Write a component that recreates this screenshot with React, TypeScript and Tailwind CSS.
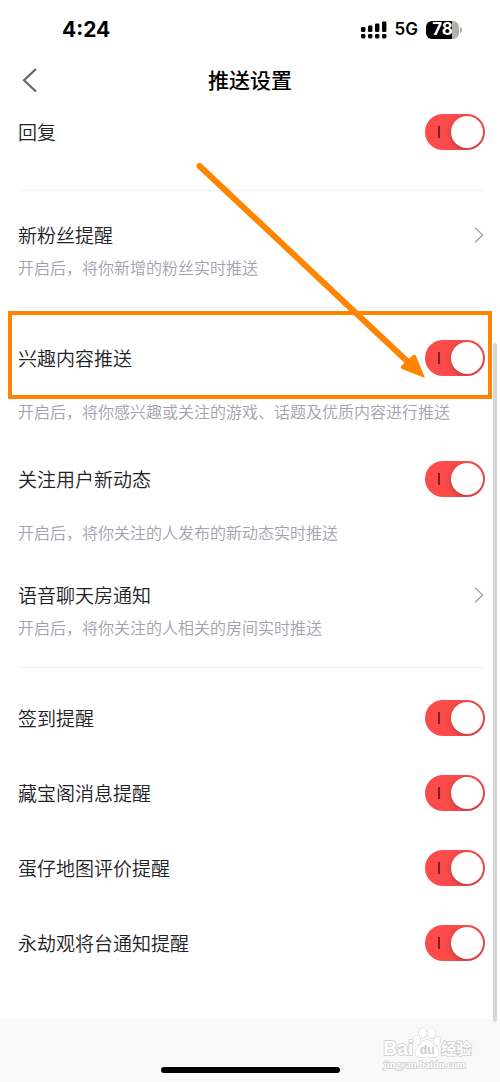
import { useState } from 'react';

function Toggle({ id }: { id: string }) {
  const [on, setOn] = useState(true);

  return (
    <input
      id={id}
      type="checkbox"
      role="switch"
      checked={on}
      onChange={(e) => setOn(e.target.checked)}
      className="relative h-9 w-15 flex-none cursor-pointer appearance-none overflow-hidden rounded-full bg-neutral-300 before:absolute before:top-3 before:left-[13px] before:h-3 before:w-[2px] before:bg-[#7c2222] after:absolute after:top-[2px] after:left-[2px] after:size-8 after:rounded-full after:bg-white after:shadow-[0_2px_6px_rgba(0,0,0,0.25)] checked:bg-[#fc4b4b] checked:after:left-[26px]"
    />
  );
}

function ToggleRow({ id, label }: { id: string; label: string }) {
  return (
    <div className="flex h-[75px] items-center justify-between pr-[15px] pl-[18px]">
      <label htmlFor={id} className="text-[19px] leading-7">
        {label}
      </label>
      <Toggle id={id} />
    </div>
  );
}

function Description({ children }: { children: React.ReactNode }) {
  return <p className="px-[18px] text-base leading-6 whitespace-nowrap text-[#a2a2ad]">{children}</p>;
}

function LinkRow({ label, description }: { label: string; description: string }) {
  return (
    <a href="#" className="block">
      <div className="flex items-center justify-between pr-4 pl-[18px]">
        <span className="text-[19px] leading-7">{label}</span>
        <svg width="10" height="16" viewBox="0 0 10 16" fill="none" stroke="#a3a3ad" strokeWidth="1.4">
          <path d="M1.2 .8 8.6 8 1.2 15.2" />
        </svg>
      </div>
      <div className="mt-[6px]">
        <Description>{description}</Description>
      </div>
    </a>
  );
}

function Divider() {
  return <hr className="mr-[17px] ml-[18px] border-[#f1f1f3]" />;
}

function StatusBar() {
  return (
    <div className="flex h-15 items-center justify-between pr-[38px] pl-[62px] font-['Inter',sans-serif] text-black">
      <span className="text-[21px] font-bold">4:24</span>
      <div className="flex items-center">
        <svg width="26" height="18" viewBox="0 0 26 18">
          <rect x="0" y="6" width="4.4" height="5" rx="1.2" />
          <rect x="7" y="4.5" width="4.4" height="6.5" rx="1.2" />
          <rect x="14" y="2.5" width="4.4" height="8.5" rx="1.2" />
          <rect x="21" y="0.5" width="4.4" height="10.5" rx="1.2" />
          <rect x="0" y="13" width="4.4" height="4.4" rx="1.3" />
          <rect x="7" y="13" width="4.4" height="4.4" rx="1.3" />
          <rect x="14" y="13" width="4.4" height="4.4" rx="1.3" />
          <rect x="21" y="13" width="4.4" height="4.4" rx="1.3" />
        </svg>
        <span className="ml-2 text-[17px] font-semibold">5G</span>
        <div className="ml-2 flex h-[18px] w-[33px] items-center justify-center rounded-md bg-linear-to-r from-black from-78% to-[#b0b0b0] to-78% text-[17px] font-bold text-white">
          78
        </div>
        <span className="ml-px h-[6px] w-[2px] rounded-r-full bg-[#b0b0b0]" />
      </div>
    </div>
  );
}

function Watermark() {
  return (
    <svg
      className="absolute top-[7px] right-6"
      width="96"
      height="46"
      viewBox="0 0 288 138"
      fill="#fff"
      stroke="#cbcbcb"
      strokeWidth="3"
      strokeLinejoin="round"
      paintOrder="stroke"
    >
      <text x="10" y="88" fontSize="58" fontWeight="700" strokeWidth="5" fontFamily="Liberation Sans, sans-serif">
        Bai
      </text>
      <ellipse cx="129" cy="21" rx="12" ry="15" />
      <ellipse cx="154" cy="22" rx="12" ry="15" />
      <ellipse cx="111" cy="41" rx="10" ry="13" transform="rotate(-15 111 41)" />
      <ellipse cx="171" cy="45" rx="10" ry="13" transform="rotate(20 171 45)" />
      <path d="M140 42c-14 0-19 14-27 22-10 10-10 28 6 30 9 1 14-2 21-2s13 3 22 2c16-2 18-20 7-31-8-8-14-21-29-21Z" />
      <text
        x="119"
        y="84"
        fontSize="37"
        fontWeight="700"
        fill="#cbcbcb"
        stroke="none"
        fontFamily="Liberation Sans, sans-serif"
      >
        du
      </text>
      <text
        x="183"
        y="84"
        fontSize="46"
        fontWeight="700"
        strokeWidth="5"
        fontFamily="Noto Sans CJK SC, sans-serif"
      >
        经验
      </text>
      <text x="10" y="127" fontSize="31" fontWeight="700" strokeWidth="4" fontFamily="Liberation Serif, serif">
        jingyan.baidu.com
      </text>
    </svg>
  );
}

export default function App() {
  return (
    <div className="relative overflow-hidden bg-white font-['Noto_Sans_CJK_SC',sans-serif] font-[350] text-[#222226]">
      <StatusBar />
      <header className="grid h-10 grid-cols-[1fr_auto_1fr] items-center px-[22px]">
        <button type="button" aria-label="返回" className="justify-self-start">
          <svg width="16" height="24" viewBox="0 0 16 24" fill="none" stroke="#666" strokeWidth="2.2">
            <path d="M14 1 2 12.3 14 23.5" />
          </svg>
        </button>
        <h1 className="pb-[2px] text-[21px] leading-8 font-medium text-black">推送设置</h1>
      </header>

      <main>
        <div className="-mt-[6px] pb-[21px]">
          <ToggleRow id="reply" label="回复" />
        </div>
        <Divider />
        <div className="pt-[30px] pb-7">
          <LinkRow label="新粉丝提醒" description="开启后，将你新增的粉丝实时推送" />
        </div>
        <Divider />

        <div className="relative pt-3">
          <ToggleRow id="interest" label="兴趣内容推送" />
          {/* highlight frame */}
          <div className="pointer-events-none absolute inset-x-2 top-[3px] bottom-[-4px] border-4 border-[#ff8400]" />
        </div>
        <div className="pt-1 pb-[18px]">
          <Description>开启后，将你感兴趣或关注的游戏、话题及优质内容进行推送</Description>
        </div>

        <ToggleRow id="following" label="关注用户新动态" />
        <div className="pt-1">
          <Description>开启后，将你关注的人发布的新动态实时推送</Description>
        </div>

        <div className="pt-[37px] pb-7">
          <LinkRow label="语音聊天房通知" description="开启后，将你关注的人相关的房间实时推送" />
        </div>
        <Divider />

        <div className="pt-3 pb-[39px]">
          <ToggleRow id="checkin" label="签到提醒" />
          <ToggleRow id="treasure" label="藏宝阁消息提醒" />
          <ToggleRow id="map-review" label="蛋仔地图评价提醒" />
          <ToggleRow id="naraka" label="永劫观将台通知提醒" />
        </div>
      </main>

      <footer className="relative flex h-[63px] items-end justify-center bg-[#f9f9f9] pb-[9px]">
        <Watermark />
        <div className="h-[6px] w-[179px] rounded-full bg-black" />
      </footer>

      {/* scroll thumb */}
      <div className="absolute top-[343px] right-[3px] bottom-[60px] w-1 rounded-full bg-[#d6d6d6]" />

      {/* pointer arrow */}
      <svg
        className="pointer-events-none absolute top-[160px] right-[70px]"
        width="240"
        height="225"
        viewBox="0 0 240 225"
        fill="#ff8400"
      >
        <path d="M9.500 6 218 202" stroke="#ff8400" strokeWidth="6" strokeLinecap="round" />
        <path d="M235 218 212 209q-2-1-1-3l12-11q2-1 3 1Z" />
      </svg>
    </div>
  );
}
